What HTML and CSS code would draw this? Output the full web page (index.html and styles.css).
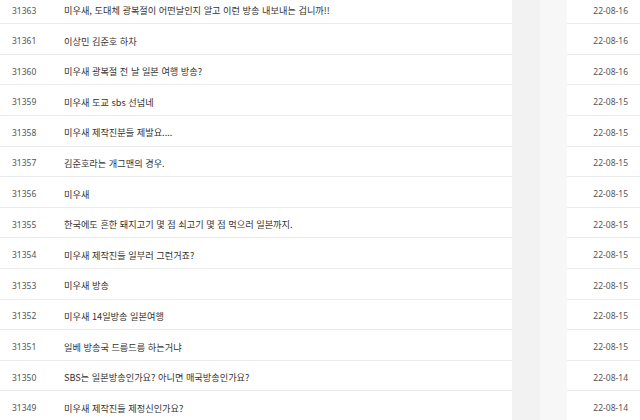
FILE: index.html
```html
<!DOCTYPE html>
<html lang="ko">
<head>
    <meta charset="UTF-8">
    <meta name="viewport" content="width=device-width, initial-scale=1.0">
    <title>게시판 목록</title>
    <link rel="stylesheet" href="styles.css">
</head>
<body>
    <div class="board">
        <div class="board-row">
            <span class="num">31363</span>
            <span class="subject">미우새, 도대체 광복절이 어떤날인지 알고 이런 방송 내보내는 겁니까!!</span>
            <span class="writer"></span>
            <span class="date">22-08-16</span>
        </div>
        <div class="board-row">
            <span class="num">31361</span>
            <span class="subject">이상민 김준호 하차</span>
            <span class="writer"></span>
            <span class="date">22-08-16</span>
        </div>
        <div class="board-row">
            <span class="num">31360</span>
            <span class="subject">미우새 광복절 전 날 일본 여행 방송?</span>
            <span class="writer"></span>
            <span class="date">22-08-16</span>
        </div>
        <div class="board-row">
            <span class="num">31359</span>
            <span class="subject">미우새 도교 sbs 선넘네</span>
            <span class="writer"></span>
            <span class="date">22-08-15</span>
        </div>
        <div class="board-row">
            <span class="num">31358</span>
            <span class="subject">미우새 제작진분들 제발요....</span>
            <span class="writer"></span>
            <span class="date">22-08-15</span>
        </div>
        <div class="board-row">
            <span class="num">31357</span>
            <span class="subject">김준호라는 개그맨의 경우.</span>
            <span class="writer"></span>
            <span class="date">22-08-15</span>
        </div>
        <div class="board-row">
            <span class="num">31356</span>
            <span class="subject">미우새</span>
            <span class="writer"></span>
            <span class="date">22-08-15</span>
        </div>
        <div class="board-row">
            <span class="num">31355</span>
            <span class="subject">한국에도 흔한 돼지고기 몇 점 쇠고기 몇 점 먹으러 일본까지.</span>
            <span class="writer"></span>
            <span class="date">22-08-15</span>
        </div>
        <div class="board-row">
            <span class="num">31354</span>
            <span class="subject">미우새 제작진들 일부러 그런거죠?</span>
            <span class="writer"></span>
            <span class="date">22-08-15</span>
        </div>
        <div class="board-row">
            <span class="num">31353</span>
            <span class="subject">미우새 방송</span>
            <span class="writer"></span>
            <span class="date">22-08-15</span>
        </div>
        <div class="board-row">
            <span class="num">31352</span>
            <span class="subject">미우새 14일방송 일본여행</span>
            <span class="writer"></span>
            <span class="date">22-08-15</span>
        </div>
        <div class="board-row">
            <span class="num">31351</span>
            <span class="subject">일베 방송국 드릉드릉 하는거냐</span>
            <span class="writer"></span>
            <span class="date">22-08-15</span>
        </div>
        <div class="board-row">
            <span class="num">31350</span>
            <span class="subject">SBS는 일본방송인가요? 아니면 매국방송인가요?</span>
            <span class="writer"></span>
            <span class="date">22-08-14</span>
        </div>
        <div class="board-row">
            <span class="num">31349</span>
            <span class="subject">미우새 제작진들 제정신인가요?</span>
            <span class="writer"></span>
            <span class="date">22-08-14</span>
        </div>
    </div>
</body>
</html>
```

FILE: styles.css
```css
body {
    margin: 0;
    background: #fff;
    font-family: "Noto Sans CJK KR", "Noto Sans", sans-serif;
    color: #333;
    overflow: hidden;
}
.board {
    margin-top: -6.3px;
}
.board-row {
    display: flex;
    align-items: center;
    box-sizing: border-box;
    height: 30.6px;
    padding: 3px 12px 0 12px;
    border-bottom: 1px solid #ececec;
}
.num {
    flex-shrink: 0;
    width: 52px;
    font-family: "Noto Sans", sans-serif;
    font-size: 8.5px;
    color: #555;
}
.subject {
    flex: 1;
    font-size: 9.2px;
    color: #333;
    white-space: nowrap;
}
.writer {
    flex-shrink: 0;
    align-self: stretch;
    width: 55px;
    margin: -3px 21px -1px 0;
    background: linear-gradient(to right, #f2f2f2 50%, #f7f7f7 50%);
}
.date {
    flex-shrink: 0;
    width: 40px;
    text-align: right;
    white-space: nowrap;
    font-family: "Noto Sans", sans-serif;
    font-size: 8.5px;
    color: #555;
}
```
